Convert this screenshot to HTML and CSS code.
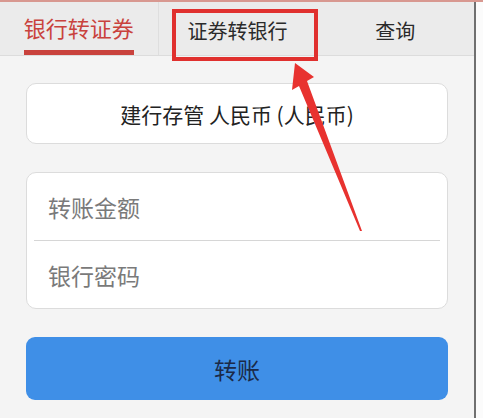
FILE: index.html
```html
<!DOCTYPE html>
<html lang="zh-CN">

<head>
    <title>银证转账</title>
    <link rel="stylesheet" href="styles.css">
</head>

<body>
    <div class="page">
        <div class="app">
            <nav class="tabs">
                <div class="tab active"><span>银行转证券</span></div>
                <div class="tab"><span>证券转银行</span></div>
                <div class="tab"><span>查询</span></div>
            </nav>
            <main class="content">
                <div class="card account">建行存管 人民币 (人民币)</div>
                <div class="card form">
                    <input type="text" placeholder="转账金额" />
                    <div class="line"></div>
                    <input type="password" placeholder="银行密码" />
                </div>
                <button class="submit">转账</button>
            </main>
        </div>
        <div class="edge"></div>
    </div>

    <div class="mark"></div>
    <svg class="arrow" width="483" height="418" viewBox="0 0 483 418">
        <polygon points="295,63 314,77 307,81 362,231 360,231 299,86 292,90" fill="#e8322f" />
    </svg>
</body>

</html>
```

FILE: styles.css
```css
* {
    box-sizing: border-box;
}

body {
    margin: 0;
    background: #fafafa;
    font-family: "Noto Sans CJK SC", "Noto Sans", sans-serif;
}

.page {
    display: flex;
    width: 483px;
    height: 418px;
    overflow: hidden;
    border-top: 2px solid #d89890;
}

.app {
    width: 476px;
    background: #f4f4f4;
    border-right: 2px solid #707070;
}

.edge {
    flex: 1;
    background: #fbfbfb;
}

.tabs {
    display: flex;
    height: 54px;
    background: #ebebeb;
    border-bottom: 1px solid #dcdcdc;

    .tab {
        flex: 1;
        display: flex;
        justify-content: center;
        align-items: center;
        font-size: 20px;
        color: #2a2a2a;

        & span {
            padding-top: 4px;
        }
    }

    .tab:first-child {
        border-right: 1px solid #dedede;
    }

    .active {
        align-items: flex-end;
        color: #c9423d;
        font-size: 22px;

        & span {
            line-height: 1.3;
            padding-top: 0;
            padding-bottom: 8px;
            border-bottom: 5px solid #c9423d;
        }
    }
}

.content {
    display: flex;
    flex-direction: column;
    gap: 28px;
    padding: 27px 26px 0 26px;
}

.card {
    background: #fff;
    border: 1px solid #dcdcdc;
    border-radius: 10px;
}

.account {
    height: 61px;
    display: flex;
    justify-content: center;
    align-items: center;
    font-size: 21px;
    color: #222;
}

.form {
    display: flex;
    flex-direction: column;
    height: 137px;
    padding: 0 7px;

    & input {
        flex: 1;
        border: none;
        outline: none;
        background: none;
        padding: 0 14px;
        font-family: inherit;
        font-size: 23px;
        color: #222;

        &::placeholder {
            color: #7a7a7a;
        }
    }

    .line {
        height: 1px;
        background: #d6d6d6;
    }
}

.submit {
    height: 63px;
    border: none;
    border-radius: 9px;
    background: #3f8fe7;
    color: #1b2a48;
    font-family: inherit;
    font-size: 23px;
}

.mark {
    position: absolute;
    left: 172px;
    top: 9px;
    width: 146px;
    height: 52px;
    border: 4px solid #e0302e;
}

.arrow {
    position: absolute;
    left: 0;
    top: 0;
    pointer-events: none;
}
```
